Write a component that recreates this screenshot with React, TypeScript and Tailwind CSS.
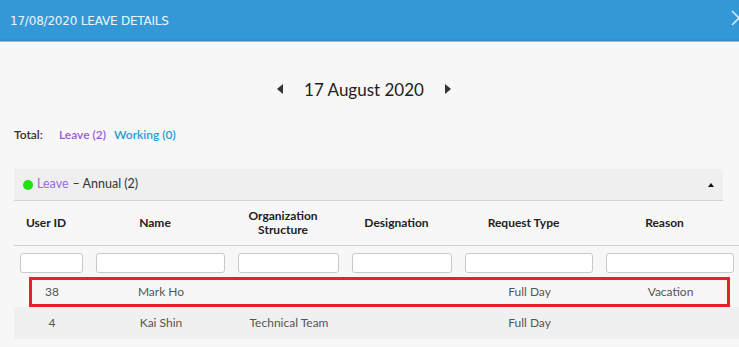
import React from "react";

const cols = "grid grid-cols-[76px_142px_114px_113px_141px_141px]";

const headers = ["User ID", "Name", "Organization Structure", "Designation", "Request Type", "Reason"];

const rows = [
  { id: "38", name: "Mark Ho", org: "", designation: "", type: "Full Day", reason: "Vacation", marked: true },
  { id: "4", name: "Kai Shin", org: "Technical Team", designation: "", type: "Full Day", reason: "", marked: false },
];

const App = () => {
  return (
    <div className="w-[739px] h-[347px] overflow-hidden bg-[#f7f7f7] font-['Lato',sans-serif]">
      <div className="h-[42px] bg-[#3598d6] border-b border-[#b3b3b3] flex items-center justify-between pl-[10px] shadow-[inset_0_-3px_3px_-2px_rgba(0,0,0,0.12)]">
        <span className="text-[12px] text-[#eef6fc] font-['DejaVu_Sans',sans-serif] tracking-[-0.2px]">
          17/08/2020 LEAVE DETAILS
        </span>
        <svg width="16" height="16" viewBox="0 0 16 16" className="-mr-[8px] mb-[6px]">
          <path d="M1 1 L15 15 M15 1 L1 15" stroke="#cfe6f6" strokeWidth="1.6" fill="none" />
        </svg>
      </div>

      <div className="px-[14px]">
        <div className="mt-[35px] h-[24px] flex items-center justify-center pr-[11px]">
          <svg width="6" height="10" viewBox="0 0 6 10">
            <path d="M6 0 L0 5 L6 10 Z" fill="#333" />
          </svg>
          <span className="mx-[21px] text-[17px] text-[#222] leading-none">17 August 2020</span>
          <svg width="6" height="10" viewBox="0 0 6 10">
            <path d="M0 0 L6 5 L0 10 Z" fill="#333" />
          </svg>
        </div>

        <div className="mt-[26px] h-[16px] flex items-center text-[12px]">
          <span className="font-semibold text-[#333] w-[45px]">Total:</span>
          <span className="font-semibold text-[#9b5bd8]">Leave (2)</span>
          <span className="ml-[8px] font-semibold text-[#1f9ed6]">Working (0)</span>
        </div>

        <div className="mt-[26px] w-[709px] h-[32px] bg-[#efefef] border-b border-[#d3d3d3] flex items-center justify-between pl-[9px] pr-[9px] text-[12.5px]">
          <div className="flex items-center">
            <span className="w-[10px] h-[10px] rounded-full bg-[#22e012] mr-[4px]"></span>
            <span className="text-[#9b6ce0]">Leave</span>
            <span className="ml-[4px] text-[#333]">– Annual (2)</span>
          </div>
          <svg width="6" height="4" viewBox="0 0 6 4">
            <path d="M0 4 L3 0 L6 4 Z" fill="#111" />
          </svg>
        </div>

        <div className="w-[727px]">
          <div className={`${cols} h-[45px] border-b border-[#cfcfcf] text-[12px] font-bold text-[#222]`}>
            {headers.map((h) => (
              <div key={h} className="flex items-center justify-center text-center leading-[14px] pl-[6px] pr-[18px]">
                {h === "Organization Structure" ? (
                  <span>
                    Organization
                    <br />
                    Structure
                  </span>
                ) : (
                  h
                )}
              </div>
            ))}
          </div>

          <div className={`${cols} h-[30px] pt-[5px]`}>
            {headers.map((h) => (
              <div key={h} className="pl-[6px] pr-[7px]">
                <input className="w-full h-[20px] bg-white border border-[#c9c9c9] rounded-[3px] outline-none" />
              </div>
            ))}
          </div>

          {rows.map((r) => (
            <div
              key={r.id}
              className={`relative ${cols} text-[12px] text-[#555] ${r.marked ? "h-[31px]" : "h-[32px] bg-[#f0f0f0]"}`}
            >
              {[r.id, r.name, r.org, r.designation, r.type, r.reason].map((v, i) => (
                <div key={i} className="flex items-center justify-center">
                  {v}
                </div>
              ))}
              {r.marked && (
                <div className="absolute left-[15px] right-[11px] top-[1px] bottom-0 border-[3px] border-[#e8202a]"></div>
              )}
            </div>
          ))}
        </div>
      </div>
    </div>
  );
};

export default App;
